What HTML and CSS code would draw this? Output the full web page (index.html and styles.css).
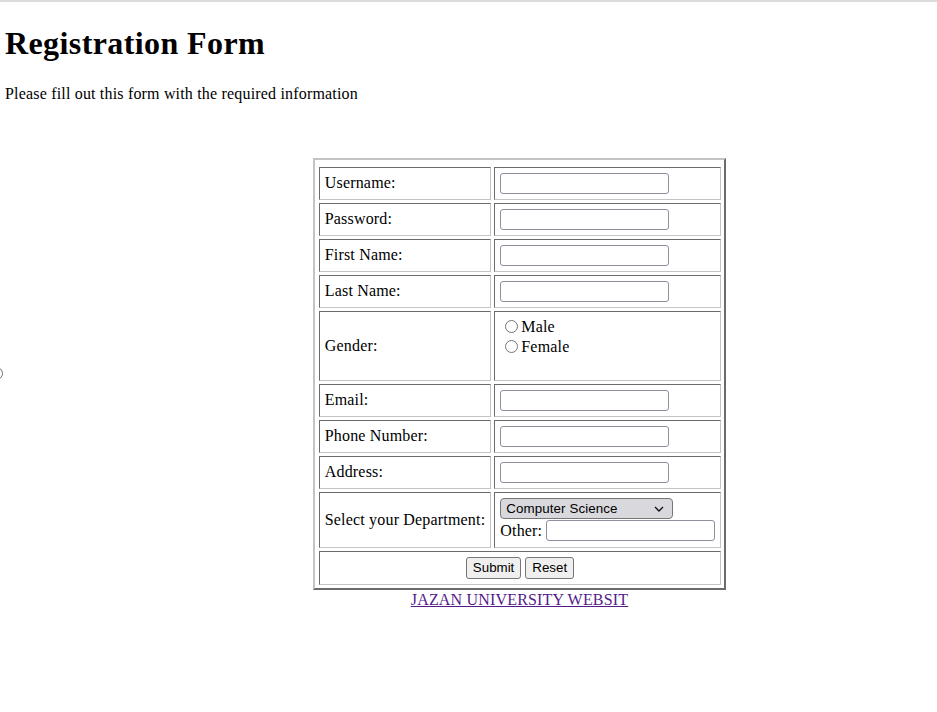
FILE: index.html
```html
<!DOCTYPE html>
<html>
<head>
<meta charset="utf-8">
<title>Registration Form</title>
<link rel="stylesheet" href="styles.css">
</head>
<body>
<div class="topbar"></div>
<div class="edge-dot"></div>
<h1 class="title">Registration Form</h1>
<p class="intro">Please fill out this form with the required information</p>
<div class="stage">
  <form class="reg">
    <table class="grid">
      <tr><td class="lbl">Username:</td><td class="fld"><input class="txt" type="text"></td></tr>
      <tr><td class="lbl">Password:</td><td class="fld"><input class="txt" type="password"></td></tr>
      <tr><td class="lbl">First Name:</td><td class="fld"><input class="txt" type="text"></td></tr>
      <tr><td class="lbl">Last Name:</td><td class="fld"><input class="txt" type="text"></td></tr>
      <tr>
        <td class="lbl">Gender:</td>
        <td class="fld">
          <div class="radios">
            <label class="opt"><input class="rad" type="radio" name="g">Male</label>
            <label class="opt"><input class="rad" type="radio" name="g">Female</label>
          </div>
        </td>
      </tr>
      <tr><td class="lbl">Email:</td><td class="fld"><input class="txt" type="text"></td></tr>
      <tr><td class="lbl">Phone Number:</td><td class="fld"><input class="txt" type="text"></td></tr>
      <tr><td class="lbl">Address:</td><td class="fld"><input class="txt" type="text"></td></tr>
      <tr>
        <td class="lbl">Select your Department:</td>
        <td class="fld">
          <div class="sel-wrap">
            <select class="sel">
              <option>Computer Science</option>
            </select>
            <svg class="chev" width="10" height="6" viewBox="0 0 10 6"><path d="M1 1 L5 5 L9 1" fill="none" stroke="#111" stroke-width="1.4"/></svg>
          </div>
          <div class="other"><span>Other:</span><input class="txt" type="text"></div>
        </td>
      </tr>
      <tr>
        <td class="actions" colspan="2">
          <div class="btns"><button class="btn" type="button">Submit</button><button class="btn" type="button">Reset</button></div>
        </td>
      </tr>
    </table>
  </form>
  <a class="site" href="#">JAZAN UNIVERSITY WEBSIT</a>
</div>
</body>
</html>
```

FILE: styles.css
```css
html, body {
  background: #ffffff;
}
body {
  margin: 5px;
  font-family: "Liberation Serif", "Times New Roman", serif;
  font-size: 16px;
  letter-spacing: 0.18px;
  color: #000;
}
.topbar {
  position: fixed;
  left: 0;
  top: 0;
  width: 100%;
  height: 2px;
  background: #dcdcdc;
}
.edge-dot {
  position: absolute;
  left: -10px;
  top: 367px;
  width: 11px;
  height: 11px;
  border: 1px solid #6f6f6f;
  border-radius: 50%;
}
.title {
  font-size: 32px;
  font-weight: bold;
  letter-spacing: 0.4px;
  margin: 20px 0 22.5px;
}
.intro {
  margin: 22.5px 0 16px;
}
.stage {
  margin-top: 55px;
  padding-left: 102px;
  display: flex;
  flex-direction: column;
  align-items: center;
}
.reg {
  margin: 0;
}
.grid {
  border-collapse: separate;
  border-spacing: 3px;
  border: 2px solid;
  border-color: #c4c4c4 #6b6b6b #6b6b6b #c4c4c4;
  padding: 4px 0 0 1px;
}
.grid td {
  border: 1px solid;
  border-color: #6b6b6b #c4c4c4 #c4c4c4 #6b6b6b;
  padding: 5px;
  vertical-align: middle;
  font-size: 16px;
}
.lbl {
  white-space: nowrap;
}
.txt {
  display: block;
  box-sizing: border-box;
  width: 169px;
  height: 21px;
  margin: 0;
  padding: 1px 2px;
  border: 1px solid #8f8f9d;
  border-radius: 3px;
  background: #fff;
  font-family: Arial, "Liberation Sans", sans-serif;
  font-size: 13.33px;
  letter-spacing: 0;
}
.radios {
  height: 58px;
  display: flex;
  flex-direction: column;
}
.opt {
  height: 20px;
  display: flex;
  align-items: center;
}
.rad {
  width: 13px;
  height: 13px;
  margin: 0 3px 0 5px;
}
.sel-wrap {
  position: relative;
  width: 173px;
  height: 21px;
  margin-bottom: 1px;
}
.sel {
  -webkit-appearance: none;
  appearance: none;
  display: block;
  box-sizing: border-box;
  width: 173px;
  height: 21px;
  margin: 0;
  padding: 0 5px;
  border: 1px solid #767676;
  border-radius: 4px;
  background: #d8d8dd;
  color: #000;
  font-family: Arial, "Liberation Sans", sans-serif;
  font-size: 13.33px;
  letter-spacing: 0.1px;
}
.chev {
  position: absolute;
  right: 9px;
  top: 8px;
  pointer-events: none;
}
.other {
  display: flex;
  align-items: center;
  gap: 4px;
  height: 22px;
}
.actions {
  text-align: center;
}
.btns {
  display: flex;
  justify-content: center;
  gap: 4px;
}
.btn {
  box-sizing: border-box;
  height: 22px;
  margin: 0;
  padding: 1px 6px;
  border: 1px solid #767676;
  border-radius: 3px;
  background: #efefef;
  color: #000;
  font-family: Arial, "Liberation Sans", sans-serif;
  font-size: 13.33px;
  letter-spacing: 0;
}
.site {
  color: #551a8b;
  text-decoration: underline;
  line-height: 19px;
}
```
